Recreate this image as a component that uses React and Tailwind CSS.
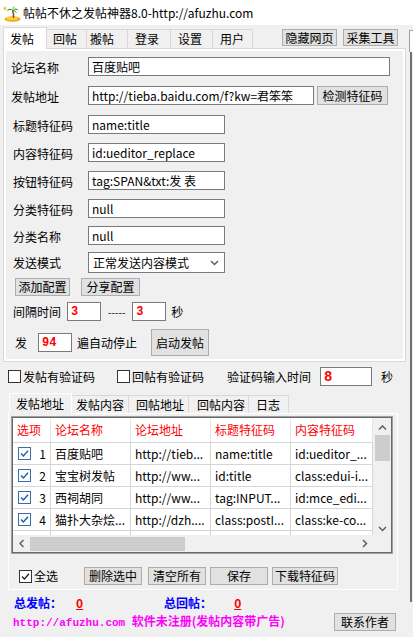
import React from 'react';

const Btn = ({ children, className = '' }) => (
  <div
    className={`flex items-center justify-center bg-[#e1e1e1] border border-[#adadad] text-[12px] leading-none whitespace-nowrap ${className}`}
  >
    {children}
  </div>
);

const Field = ({ children, className = '' }) => (
  <div
    className={`flex items-center bg-white border border-[#7a7a7a] pl-[3px] text-[12px] leading-none whitespace-nowrap overflow-hidden ${className}`}
  >
    {children}
  </div>
);

const Box = ({ className = '' }) => (
  <div className={`w-[13px] h-[13px] bg-white border border-[#333333] ${className}`} />
);

const Tick = ({ color = '#1f5fa8', border = '#3a6ea5' }) => (
  <svg width="13" height="13" viewBox="0 0 13 13">
    <rect x="0.5" y="0.5" width="12" height="12" fill="#fbfdff" stroke={border} />
    <path d="M3 6.5 L5.4 9 L10 3.8" fill="none" stroke={color} strokeWidth="1.4" />
  </svg>
);

const Palm = () => (
  <svg width="18" height="17" viewBox="0 0 18 17">
    <path d="M2 1 L2.6 2.6 L4.2 2.8 L3 3.8 L3.4 5.4 L2 4.5 L0.6 5.4 L1 3.8 L-0.2 2.8 L1.4 2.6 Z" fill="#f7c21a" />
    <ellipse cx="9.5" cy="14" rx="8" ry="2.8" fill="#e8a916" />
    <ellipse cx="9" cy="13.3" rx="6.5" ry="1.8" fill="#f8d23c" />
    <path d="M10.5 13 C10.8 10 10.4 7.5 9.6 5" stroke="#8a4a1c" strokeWidth="1.5" fill="none" />
    <path d="M9.6 5 C7.5 3 5 3.5 4 6 C6 4.8 8 4.8 9.6 5 Z" fill="#2f9e2a" />
    <path d="M9.6 5 C11.5 2.8 14.5 3 15.5 5.5 C13.5 4.5 11.5 4.6 9.6 5 Z" fill="#38b030" />
    <path d="M9.6 5 C9 3 10 1.5 12 1.2 C11 2.5 10.3 3.6 9.6 5 Z" fill="#4cc23c" />
    <path d="M9.6 5 C12 5.2 13.5 6.5 14 8.5 C12.5 7 11 6 9.6 5 Z" fill="#2a8f26" />
  </svg>
);

const Chevron = ({ dir = 'down', className = '' }) => {
  const paths = {
    down: 'M1 1 L4.5 4.5 L8 1',
    up: 'M1 4.5 L4.5 1 L8 4.5',
    left: 'M4.5 1 L1 4.5 L4.5 8',
    right: 'M1 1 L4.5 4.5 L1 8',
  };
  const vert = dir === 'up' || dir === 'down';
  return (
    <svg
      width={vert ? 9 : 6}
      height={vert ? 6 : 9}
      viewBox={vert ? '0 0 9 6' : '0 0 6 9'}
      className={className}
    >
      <path d={paths[dir]} fill="none" stroke="#606060" strokeWidth="1.5" />
    </svg>
  );
};

const Row = ({ label, pl = 'pl-[5px]', mt, children }) => (
  <div className={`flex items-center h-[19px] ${mt}`}>
    <div className={`w-[82px] ${pl} pt-[3px] leading-none whitespace-nowrap`}>{label}</div>
    {children}
  </div>
);

const topTabs = [
  { t: '回帖', w: 'w-[40px]', pl: 'pl-[6px]' },
  { t: '搬帖', w: 'w-[41px]', pl: 'pl-[3px]' },
  { t: '登录', w: 'w-[43px]', pl: 'pl-[7px]' },
  { t: '设置', w: 'w-[42px]', pl: 'pl-[7px]' },
  { t: '用户', w: 'w-[40px]', pl: 'pl-[7px]' },
];

const subTabs = [
  { t: '发帖内容', w: 'w-[57px]', pl: 'pl-[4px]' },
  { t: '回帖地址', w: 'w-[60px]', pl: 'pl-[7px]' },
  { t: '回帖内容', w: 'w-[60px]', pl: 'pl-[8px]' },
  { t: '日志', w: 'w-[40px]', pl: 'pl-[7px]' },
];

const rows = [
  ['1', '百度贴吧', 'http://tieb...', 'name:title', 'id:ueditor_...'],
  ['2', '宝宝树发帖', 'http://ww...', 'id:title', 'class:edui-i...'],
  ['3', '西祠胡同', 'http://ww...', 'tag:INPUT...', 'id:mce_edi...'],
  ['4', '猫扑大杂烩...', 'http://dzh....', 'class:postI...', 'class:ke-co...'],
];

const cols = ['w-[38px]', 'w-[80px]', 'w-[80px]', 'w-[80px]', 'w-[82px]'];

export default function App() {
  return (
    <div className="w-[413px] h-[637px] overflow-hidden bg-[#f0f0f0] text-black text-[12px] font-['Noto_Sans_CJK_SC','Liberation_Sans',sans-serif]">
      {/* title bar */}
      <div className="h-[25px] bg-white flex items-center">
        <div className="ml-[3px] mt-[1px]">
          <Palm />
        </div>
        <span className="ml-[2px] text-[12px] leading-none">帖帖不休之发帖神器8.0-http://afuzhu.com</span>
      </div>

      <div className="flex">
        <div className="w-[406px] pl-[3px] shrink-0">
          {/* top tab strip */}
          <div className="flex items-end h-[23px]">
            <div className="relative z-10 -mb-px w-[44px] h-[22px] bg-white border border-b-0 border-[#d9d9d9] pl-[6px] flex items-center leading-none">
              发帖
            </div>
            {topTabs.map((tab) => (
              <div
                key={tab.t}
                className={`${tab.w} ${tab.pl} h-[19px] border border-b-0 border-l-0 border-[#d9d9d9] flex items-center leading-none`}
              >
                {tab.t}
              </div>
            ))}
            <div className="self-start mt-[4px] ml-[29px] flex gap-[6px]">
              <Btn className="w-[55px] h-[17px]">隐藏网页</Btn>
              <Btn className="w-[55px] h-[17px]">采集工具</Btn>
            </div>
          </div>

          {/* top tab page */}
          <div className="w-[403px] bg-white border border-[#d9d9d9] p-[2px]">
            <div className="bg-[#f0f0f0] h-[308px] pt-[6px]">
              <Row label="论坛名称" mt="">
                <Field className="w-[302px] h-[19px]">百度贴吧</Field>
              </Row>
              <Row label="发帖地址" mt="mt-[10px]">
                <Field className="w-[226px] h-[19px]">http://tieba.baidu.com/f?kw=君笨笨</Field>
                <Btn className="ml-[3px] w-[71px] h-[19px]">检测特征码</Btn>
              </Row>
              <Row label="标题特征码" pl="pl-[7px]" mt="mt-[10px]">
                <Field className="w-[137px] h-[19px]">name:title</Field>
              </Row>
              <Row label="内容特征码" pl="pl-[7px]" mt="mt-[9px]">
                <Field className="w-[137px] h-[19px]">id:ueditor_replace</Field>
              </Row>
              <Row label="按钮特征码" pl="pl-[7px]" mt="mt-[9px]">
                <Field className="w-[137px] h-[19px]">tag:SPAN&amp;txt:发 表</Field>
              </Row>
              <Row label="分类特征码" pl="pl-[7px]" mt="mt-[9px]">
                <Field className="w-[137px] h-[19px]">null</Field>
              </Row>
              <Row label="分类名称" pl="pl-[7px]" mt="mt-[8px]">
                <Field className="w-[137px] h-[19px]">null</Field>
              </Row>
              <div className="flex items-center h-[21px] mt-[7px]">
                <div className="w-[82px] pl-[7px] leading-none">发送模式</div>
                <div className="w-[137px] h-[21px] bg-white border border-[#7a7a7a] flex items-center pl-[4px] leading-none">
                  正常发送内容模式
                  <Chevron dir="down" className="ml-auto mr-[5px]" />
                </div>
              </div>
              <div className="flex h-[18px] mt-[5px] pl-[9px] gap-[11px]">
                <Btn className="w-[55px] h-[18px]">添加配置</Btn>
                <Btn className="w-[59px] h-[18px]">分享配置</Btn>
              </div>
              <div className="flex items-center h-[19px] mt-[6px]">
                <div className="w-[61px] pl-[7px] leading-none">间隔时间</div>
                <Field className="w-[34px] h-[19px] pl-[2px] text-[#ff0000] font-bold font-['Liberation_Mono',monospace] text-[11px]">3</Field>
                <span className="ml-[7px] text-[10px] leading-none">-----</span>
                <Field className="ml-[7px] w-[34px] h-[19px] pl-[2px] text-[#ff0000] font-bold font-['Liberation_Mono',monospace] text-[11px]">3</Field>
                <span className="ml-[5px] leading-none">秒</span>
              </div>
              <div className="flex items-center h-[27px] mt-[8px]">
                <div className="w-[32px] pl-[9px] leading-none">发</div>
                <Field className="w-[34px] h-[19px] pl-[2px] text-[#ff0000] font-bold font-['Liberation_Mono',monospace] text-[11px]">94</Field>
                <span className="ml-[5px] leading-none">遍自动停止</span>
                <Btn className="ml-[14px] w-[58px] h-[27px]">启动发帖</Btn>
              </div>
            </div>
          </div>

          {/* verify code row */}
          <div className="flex items-center h-[19px] mt-[5px]">
            <Box className="ml-[5px]" />
            <span className="ml-[2px] leading-none">发帖有验证码</span>
            <Box className="ml-[22px]" />
            <span className="ml-[2px] leading-none">回帖有验证码</span>
            <span className="ml-[23px] leading-none">验证码输入时间</span>
            <Field className="ml-[9px] w-[52px] h-[19px] pl-[3px] text-[#ff0000] font-bold font-['Liberation_Mono',monospace] text-[14px]">8</Field>
            <span className="ml-[9px] leading-none">秒</span>
          </div>

          {/* sub tab strip */}
          <div className="flex items-end h-[21px] mt-[6px] pl-[6px]">
            <div className="relative z-10 -mb-px w-[63px] h-[21px] bg-[#f0f0f0] border border-b-0 border-white pl-[6px] flex items-center leading-none">
              发帖地址
            </div>
            {subTabs.map((tab) => (
              <div
                key={tab.t}
                className={`${tab.w} ${tab.pl} h-[18px] border border-b-0 border-l-0 border-[#d9d9d9] flex items-center leading-none`}
              >
                {tab.t}
              </div>
            ))}
          </div>

          {/* sub tab page */}
          <div className="ml-[5px] w-[390px] h-[177px] border border-white">
            <div className="ml-[2px] mt-[2px] w-[382px] h-[138px] border border-[#a0a0a0]">
              <div className="w-[380px] h-[136px] border border-[#696969] bg-white flex flex-col">
                <div className="flex h-[117px]">
                  <div className="w-[360px] overflow-hidden">
                    <div className="flex h-[24px] text-[#ff0000] leading-none">
                      {['选项', '论坛名称', '论坛地址', '标题特征码', '内容特征码'].map((h, i) => (
                        <div
                          key={h}
                          className={`${cols[i]} shrink-0 flex items-center pl-[4px] border-r border-[#e5e5e5]`}
                        >
                          {h}
                        </div>
                      ))}
                    </div>
                    {rows.map((r) => (
                      <div key={r[0]} className="flex h-[22px] border-t border-[#d6d6d6] leading-none">
                        <div className={`${cols[0]} shrink-0 flex items-center pl-[5px] border-r border-[#d6d6d6]`}>
                          <Tick />
                          <span className="ml-auto mr-[4px]">{r[0]}</span>
                        </div>
                        {r.slice(1).map((c, i) => (
                          <div
                            key={i}
                            className={`${cols[i + 1]} shrink-0 flex items-center pl-[4px] border-r border-[#d6d6d6] whitespace-nowrap overflow-hidden`}
                          >
                            {c}
                          </div>
                        ))}
                      </div>
                    ))}
                    <div className="flex h-[10px] border-t border-[#d6d6d6]">
                      {cols.map((c, i) => (
                        <div key={i} className={`${c} shrink-0 border-r border-[#d6d6d6]`} />
                      ))}
                    </div>
                  </div>
                  <div className="w-[18px] bg-[#f0f0f0] flex flex-col items-center">
                    <Chevron dir="up" className="mt-[7px]" />
                    <div className="mt-[4px] w-[15px] h-[26px] bg-[#cdcdcd]" />
                    <Chevron dir="down" className="mt-auto mb-[3px]" />
                  </div>
                </div>
                <div className="flex h-[17px] bg-[#f0f0f0]">
                  <div className="w-[360px] flex items-center">
                    <Chevron dir="left" className="ml-[6px]" />
                    <div className="ml-[5px] w-[155px] h-[14px] bg-[#cdcdcd]" />
                    <Chevron dir="right" className="ml-auto mr-[5px]" />
                  </div>
                  <div className="w-[18px]" />
                </div>
              </div>
            </div>

            <div className="flex items-center h-[18px] mt-[13px]">
              <div className="ml-[10px] w-[13px] h-[13px] bg-white border border-[#333333] flex items-center justify-center">
                <svg width="11" height="11" viewBox="0 0 11 11">
                  <path d="M2 5.5 L4.4 8 L9 2.8" fill="none" stroke="#222" strokeWidth="1.3" />
                </svg>
              </div>
              <span className="ml-[2px] leading-none">全选</span>
              <Btn className="ml-[26px] w-[58px] h-[18px]">删除选中</Btn>
              <Btn className="ml-[6px] w-[58px] h-[18px]">清空所有</Btn>
              <Btn className="ml-[4px] w-[58px] h-[18px]">保存</Btn>
              <Btn className="ml-[4px] w-[66px] h-[18px]">下载特征码</Btn>
            </div>
          </div>

          {/* stats */}
          <div className="flex items-center h-[14px] mt-[6px] font-bold leading-none">
            <span className="ml-[11px] text-[#0000ff]">总发帖：</span>
            <span className="ml-[14px] text-[#ff0000] underline">0</span>
            <span className="ml-[81px] text-[#0000ff]">总回帖：</span>
            <span className="ml-[22px] text-[#ff0000] underline">0</span>
          </div>
          <div className="flex items-center h-[18px] mt-[3px]">
            <span className="ml-[10px] text-[#ff00ff] font-bold leading-none whitespace-nowrap">
              <span className="font-['Liberation_Mono',monospace] text-[11px]">http://afuzhu.com </span>
              软件未注册(发帖内容带广告)
            </span>
            <Btn className="ml-auto mr-[10px] w-[62px] h-[18px]">联系作者</Btn>
          </div>
        </div>

        {/* clipped control at right edge */}
        <div className="ml-[3px] mt-[5px] flex flex-col">
          <div className="w-[4px] h-[22px] bg-white border-l border-t border-[#a0a0a0]" />
          <div className="ml-px w-[2px] h-[550px] bg-[#707070]" />
        </div>
      </div>
    </div>
  );
}
